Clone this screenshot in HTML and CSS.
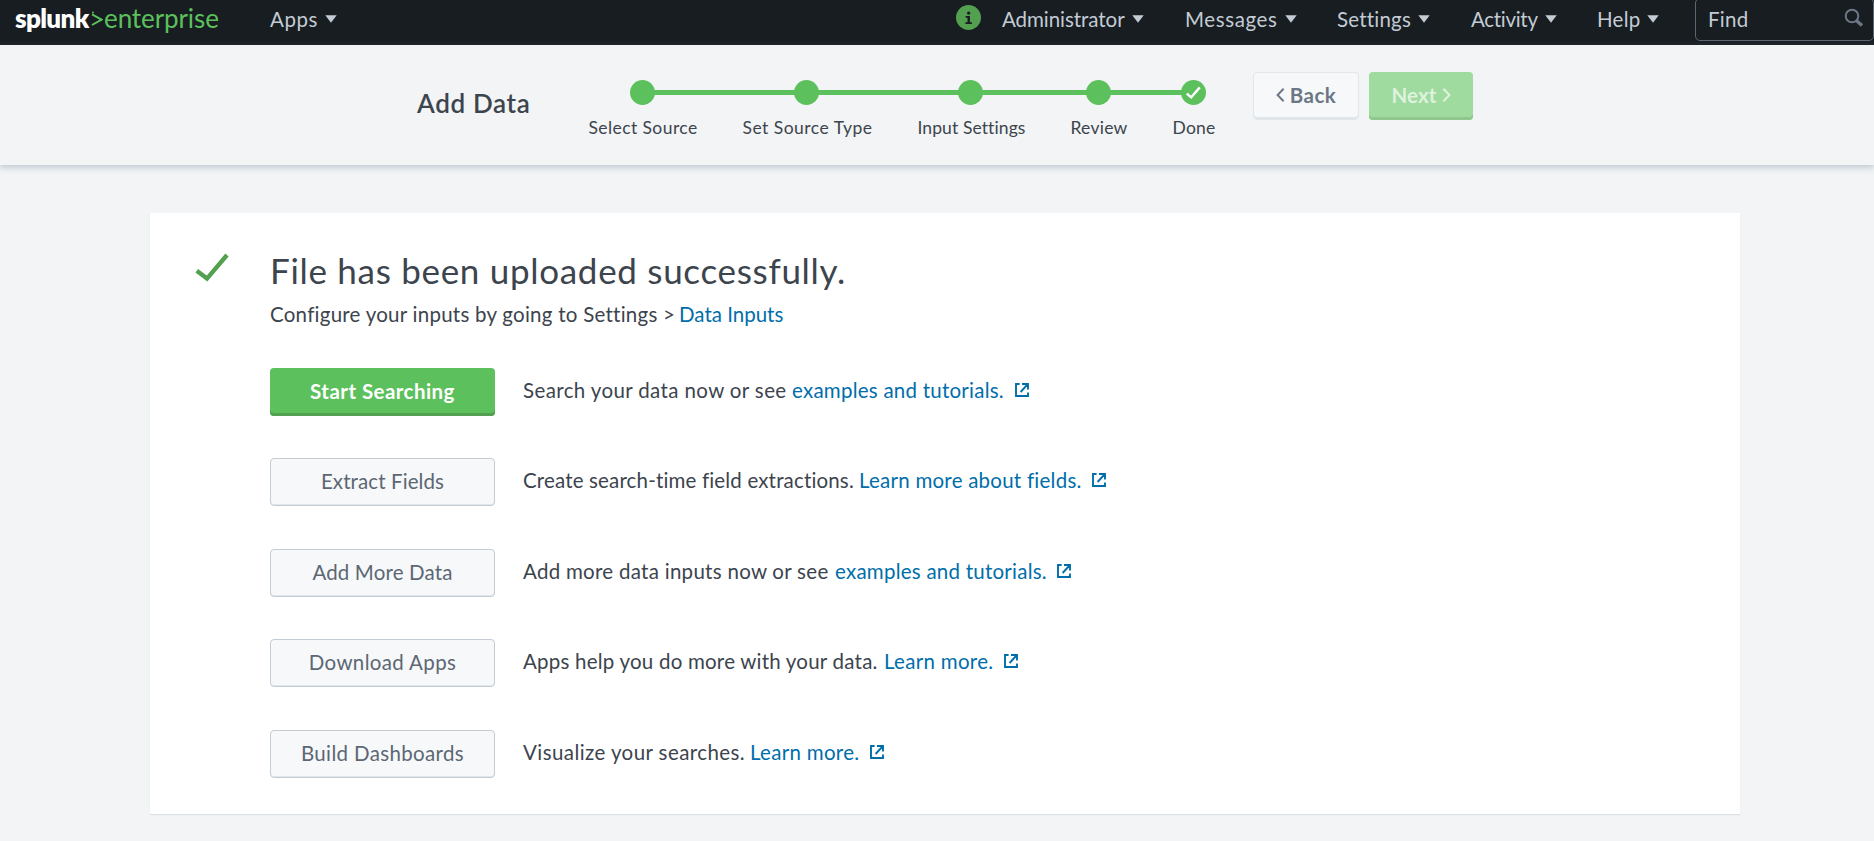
FILE: index.html
```
<!DOCTYPE html>
<html lang="en">
<head>
<meta charset="utf-8">
<title>Add Data | Splunk</title>
<link rel="stylesheet" href="styles.css">
</head>
<body>
<svg class="defs" width="0" height="0" aria-hidden="true">
  <symbol id="external" viewBox="0 0 14 14"><path d="M4.6 1H1v12h12V9.6M7 1h6v5.6M12.6 1.4L5.6 9" fill="none" stroke="currentColor" stroke-width="1.9"/></symbol>
  <symbol id="caret" viewBox="0 0 12 8"><path d="M.3 .2h11.4L6 7.8z" fill="currentColor"/></symbol>
</svg>
<header class="topbar">
  <a class="logo"><span class="logo-name">splunk</span><svg class="logo-mark" viewBox="0 0 12 16"><path d="M1 3.4L10.6 8.6L1 14" fill="none" stroke="currentColor" stroke-width="2"/><circle cx="2" cy="1.4" r="1" fill="currentColor"/></svg><span class="logo-product">enterprise</span></a>
  <nav class="nav">
    <a class="nav-item apps"><span>Apps</span><svg class="caret"><use href="#caret"/></svg></a>
    <svg class="info" viewBox="0 0 25 25"><circle cx="12.5" cy="12.5" r="12.5" fill="#53a051"/><circle cx="12.7" cy="8.1" r="1.7" fill="#171d21"/><path d="M9.6 11h4.3v6.2h2v1.8H9.4v-1.8h2.1v-4.4H9.6z" fill="#171d21"/></svg>
    <a class="nav-item admin"><span>Administrator</span><svg class="caret"><use href="#caret"/></svg></a>
    <a class="nav-item messages"><span>Messages</span><svg class="caret"><use href="#caret"/></svg></a>
    <a class="nav-item settings"><span>Settings</span><svg class="caret"><use href="#caret"/></svg></a>
    <a class="nav-item activity"><span>Activity</span><svg class="caret"><use href="#caret"/></svg></a>
    <a class="nav-item help"><span>Help</span><svg class="caret"><use href="#caret"/></svg></a>
  </nav>
  <div class="find"><span>Find</span><svg class="search" viewBox="0 0 20 20"><circle cx="8" cy="8" r="6.3" fill="none" stroke="currentColor" stroke-width="2"/><path d="M12.4 12.4L18 17.6" stroke="currentColor" stroke-width="3.4"/></svg></div>
</header>
<section class="wizard">
  <h1 class="wizard-title">Add Data</h1>
  <ol class="steps">
    <li class="step source"><i class="dot"></i><span>Select Source</span></li>
    <li class="step type"><i class="dot"></i><span>Set Source Type</span></li>
    <li class="step input"><i class="dot"></i><span>Input Settings</span></li>
    <li class="step review"><i class="dot"></i><span>Review</span></li>
    <li class="step done"><i class="dot"><svg class="dot-check" viewBox="0 0 25 25"><path d="M5.8 13.6L10.2 17.4L18.8 7.4" fill="none" stroke="#fff" stroke-width="2.4"/></svg></i><span>Done</span></li>
  </ol>
  <div class="wizard-buttons">
    <button class="btn back"><svg class="chevron" viewBox="0 0 9 14"><path d="M7.6 .8L1.6 7L7.6 13.2" fill="none" stroke="currentColor" stroke-width="2"/></svg><span>Back</span></button>
    <button class="btn next"><span>Next</span><svg class="chevron" viewBox="0 0 9 14"><path d="M1.4 .8L7.4 7L1.4 13.2" fill="none" stroke="currentColor" stroke-width="2"/></svg></button>
  </div>
</section>
<main class="card">
  <svg class="success" viewBox="0 0 34 29"><path d="M1.8 17.8L12 25.6L32 2" fill="none" stroke="#53a051" stroke-width="4.4"/></svg>
  <div class="content">
    <h2 class="headline">File has been uploaded successfully.</h2>
    <p class="hint"><span class="hint-text">Configure your inputs by going to Settings &gt;</span><a class="link hint-link">Data Inputs</a></p>
    <div class="actions">
      <div class="row search-row"><button class="btn primary">Start Searching</button><span class="desc">Search your data now or see</span><a class="link">examples and tutorials.</a><svg class="external"><use href="#external"/></svg></div>
      <div class="row extract-row"><button class="btn">Extract Fields</button><span class="desc">Create search-time field extractions.</span><a class="link">Learn more about fields.</a><svg class="external"><use href="#external"/></svg></div>
      <div class="row add-row"><button class="btn">Add More Data</button><span class="desc">Add more data inputs now or see</span><a class="link">examples and tutorials.</a><svg class="external"><use href="#external"/></svg></div>
      <div class="row apps-row"><button class="btn">Download Apps</button><span class="desc">Apps help you do more with your data.</span><a class="link">Learn more.</a><svg class="external"><use href="#external"/></svg></div>
      <div class="row dash-row"><button class="btn">Build Dashboards</button><span class="desc">Visualize your searches.</span><a class="link">Learn more.</a><svg class="external"><use href="#external"/></svg></div>
    </div>
  </div>
</main>
</body>
</html>
```
FILE: styles.css
```
* { box-sizing: border-box; }
body {
  margin: 0;
  height: 841px;
  overflow: hidden;
  background: #f2f4f5;
  color: #3c444d;
  font: 400 20.5px/24px Lato, "Liberation Sans", sans-serif;
}
h1, h2, p, ol { margin: 0; padding: 0; }
svg { display: block; flex: none; }
span, a { white-space: nowrap; }
.defs { position: absolute; }

/* Top bar */
.topbar {
  display: flex;
  height: 45px;
  background: linear-gradient(#171d21 88%, #1f262b);
  color: #c3cbd4;
}
.logo { display: flex; width: 254px; padding: 3px 0 0 15px; font-size: 26px; line-height: 31px; }
.logo-name { width: 75px; color: #fff; font-weight: 800; letter-spacing: -.65px; }
.logo-mark { width: 12px; height: 16px; margin: 8px 1px 0 1px; color: #5cc05c; }
.logo-product { color: #5cc05c; letter-spacing: -.1px; }
.nav { display: flex; width: 1441px; padding: 7px 0 0 15px; }
.nav-item { display: flex; justify-content: space-between; height: 24px; letter-spacing: .25px; }
.caret { width: 12px; height: 8px; margin-top: 8px; }
.info { width: 25px; height: 25px; margin: -2px 0 0 619px; }
.apps { width: 67px; margin-left: 1px; letter-spacing: .6px; }
.admin { width: 142px; margin-left: 21px; letter-spacing: -.05px; }
.messages { width: 112px; margin-left: 41px; letter-spacing: .6px; }
.settings { width: 93px; margin-left: 40px; letter-spacing: .2px; }
.activity { width: 86px; margin-left: 41px; letter-spacing: -.3px; }
.help { width: 62px; margin-left: 40px; }
.find {
  display: flex;
  justify-content: space-between;
  width: 179px;
  height: 43px;
  margin-top: -2px;
  padding: 8px 9px 0 12px;
  border: 1px solid #5c6773;
  border-radius: 5px;
  letter-spacing: .3px;
}
.search { width: 20px; height: 20px; margin-top: 1px; color: #6b7785; }

/* Wizard header */
.wizard {
  display: flex;
  height: 120px;
  padding-left: 417px;
  box-shadow: 0 1px 7px 1px #b8c3cd;
  background: #f2f4f5;
}
.topbar, .wizard { position: relative; }
.topbar { z-index: 1; }
.wizard-title { width: 171px; padding-top: 43px; font-size: 26px; line-height: 31px; font-weight: 600; letter-spacing: .65px; }
.steps { position: relative; display: flex; gap: 46px; height: 96px; padding-top: 35px; list-style: none; }
.steps::before { content: ""; position: absolute; left: 54px; right: 21px; top: 45px; height: 5px; background: #5cc05c; }
.step { position: relative; display: flex; flex-direction: column; align-items: center; gap: 13px; font-size: 17.5px; line-height: 20px; }
.step span { padding-left: 2px; }
.dot { flex: none; width: 25px; height: 25px; border-radius: 50%; background: #5cc05c; }
.dot-check { width: 25px; height: 25px; }
.source { width: 108px; letter-spacing: .42px; }
.type { width: 129px; letter-spacing: .48px; }
.input { width: 107px; letter-spacing: .1px; }
.review { width: 56px; letter-spacing: .25px; }
.done { width: 42px; letter-spacing: .2px; }
.wizard-buttons { display: flex; gap: 10px; padding: 27px 0 0 39px; }

/* Buttons */
.btn {
  display: flex;
  align-items: center;
  justify-content: center;
  width: 225px;
  height: 48px;
  padding: 0 0 2px;
  border: 1px solid #c3cbd4;
  border-radius: 4px;
  background: #f7f8fa;
  box-shadow: inset 0 -1px 0 #e1e6eb;
  color: #5c6773;
  font: inherit;
  line-height: 24px;
}
.primary { border: 0; background: #5cc05c; box-shadow: inset 0 -3px 0 #53a051; color: #fff; font-weight: 700; letter-spacing: .45px; }
.chevron { width: 9px; height: 14px; }
.back { width: 106px; gap: 5px; border-color: #e1e6eb; box-shadow: inset 0 -2px 0 #e1e6eb; color: #6b7785; font-weight: 700; letter-spacing: .5px; }
.next { width: 104px; gap: 5px; border: 0; background: #9fdb9f; box-shadow: inset 0 -3px 0 #90c78f; color: #def2de; font-weight: 700; letter-spacing: .15px; }

/* Result card */
.card {
  display: flex;
  width: 1590px;
  height: 601px;
  margin: 48px 0 0 150px;
  padding: 36px 0 0 44px;
  background: #fff;
  box-shadow: 0 1px 1px #dde1e5;
}
.success { width: 34px; height: 29px; margin: 4px 41px 0 1px; }
.headline { font-size: 35px; line-height: 42px; font-weight: 400; letter-spacing: .7px; }
.hint { display: flex; margin-top: 11px; }
.hint-text { width: 409px; letter-spacing: .25px; }
.hint-link { letter-spacing: 0; }
.link { color: #006eaa; }
.actions { display: flex; flex-direction: column; gap: 42.5px; margin-top: 41.9px; }
.row { display: flex; height: 48px; }
.row .btn { margin-right: 28px; }
.desc, .row .link { padding-top: 10px; }
.external { width: 14px; height: 14px; margin-top: 15px; color: #006eaa; }
.search-row .desc { width: 269px; letter-spacing: .38px; }
.search-row .link { width: 223px; }
.add-row .link { width: 222px; }
.search-row .link, .add-row .link { letter-spacing: .24px; }
.extract-row .desc { width: 336px; letter-spacing: .16px; }
.extract-row .link { width: 233px; letter-spacing: .24px; }
.extract-row .btn { letter-spacing: .1px; }
.add-row .desc { width: 312px; letter-spacing: .28px; }
.add-row .btn { letter-spacing: .15px; }
.apps-row .desc { width: 361px; letter-spacing: .22px; }
.apps-row .link, .dash-row .link { width: 120px; letter-spacing: .3px; }
.apps-row .btn, .dash-row .btn { letter-spacing: .35px; }
.dash-row .desc { width: 227px; letter-spacing: .42px; }
```
